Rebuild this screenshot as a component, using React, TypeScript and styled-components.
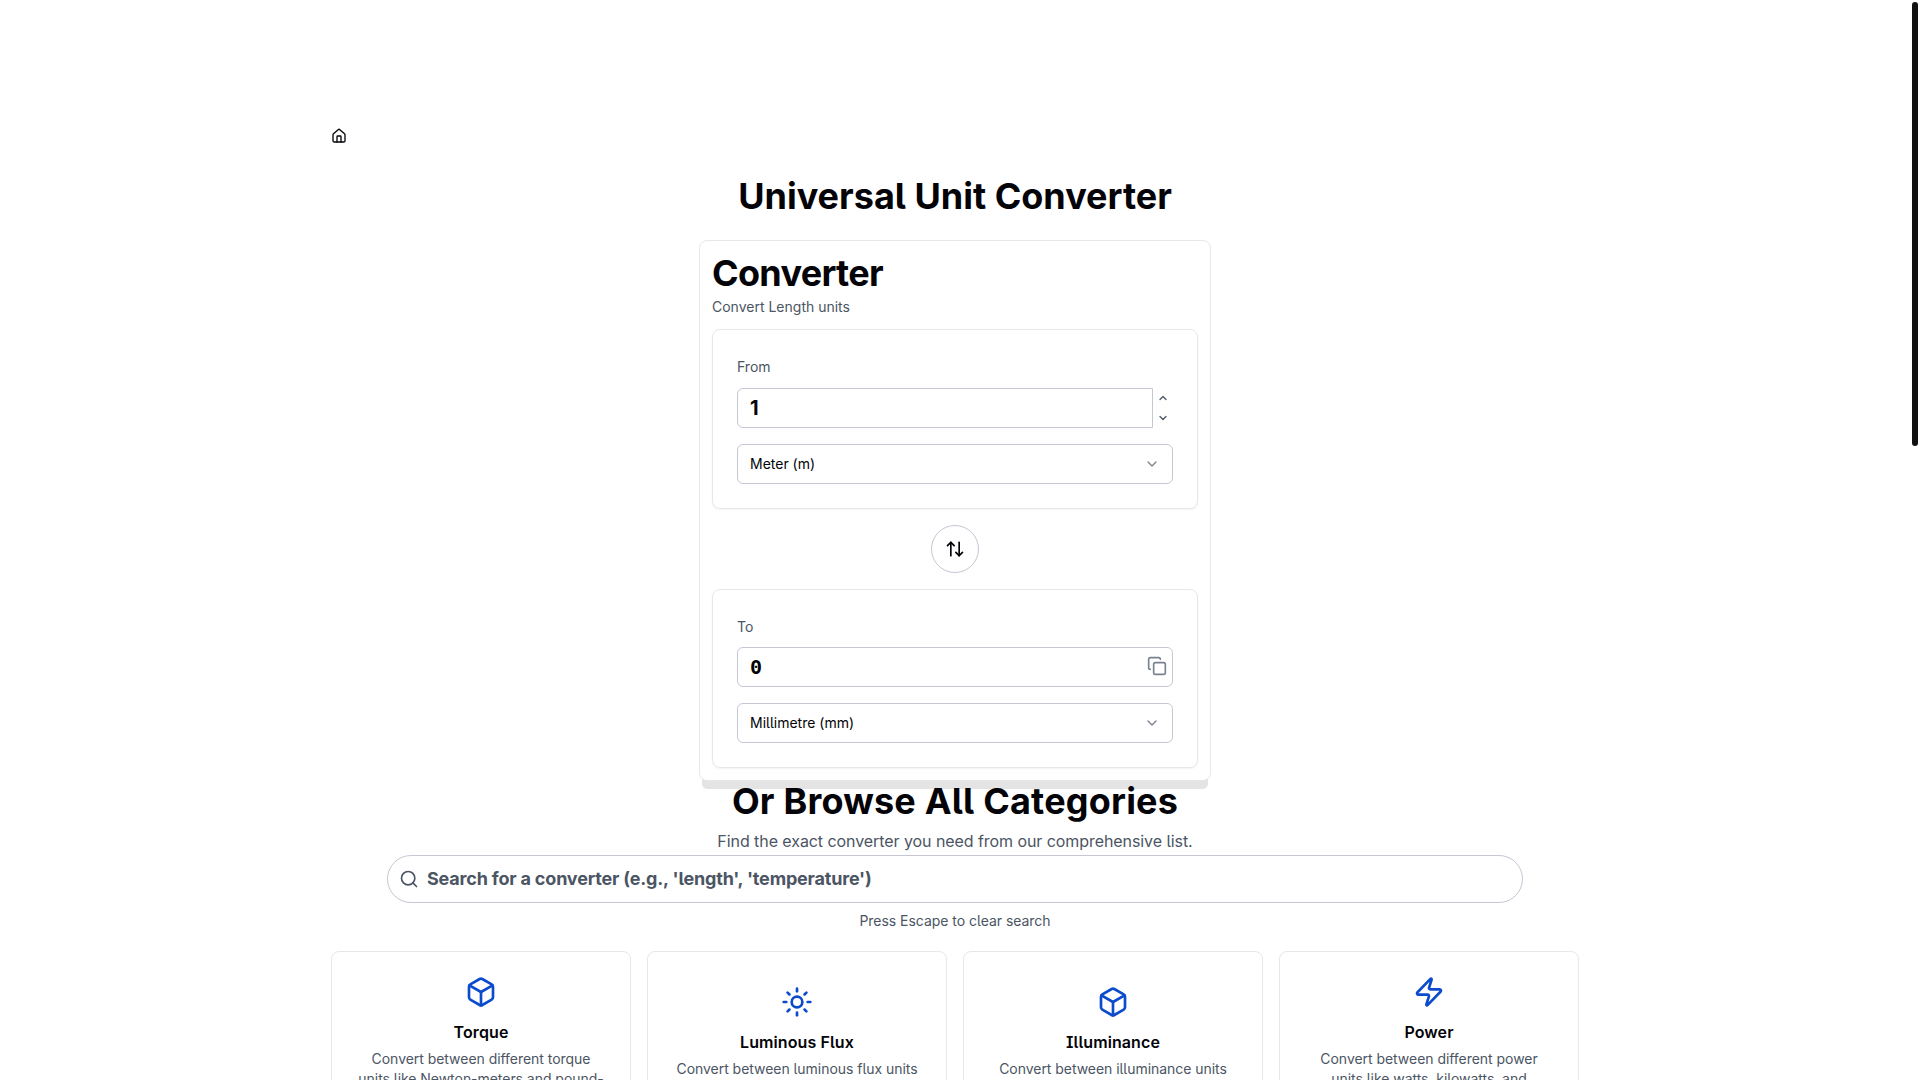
import { ArrowUpDown, Box, ChevronDown, ChevronUp, Copy, House, Search, Sun, Zap } from "lucide-react";
import type { LucideIcon } from "lucide-react";
import styled, { createGlobalStyle } from "styled-components";

const GlobalStyle = createGlobalStyle`
    body{
        margin:0;
        padding-right:10px;
        background:#fff;
        color:#030308;
        font-family:Inter, "Noto Sans", sans-serif;
        font-feature-settings:"ss02", "cv05", "cv08", "zero";
    }
    *{
        box-sizing:border-box;
    }
    input, button{
        font-feature-settings:inherit;
    }
`;

// the page's scrollbar thumb, headless capture does not paint a real one
const ScrollThumb = styled.div`
    position:fixed;
    top:2px;
    right:2px;
    width:6px;
    height:444px;
    border-radius:3px;
    background:#111;
`;

const Page = styled.main`
    max-width:1280px;
    margin:0 auto;
    padding:128px 16px 64px;
`;

const HomeLink = styled.a`
    display:flex;
    width:16px;
    height:16px;
    color:#030308;
`;

const Title = styled.h1`
    margin:32px 0 24px;
    font-size:36px;
    line-height:40px;
    font-weight:700;
    text-align:center;
`;

const ConverterCard = styled.section`
    width:512px;
    margin:0 auto;
    padding:12px;
    border:1px solid #e5e7eb;
    border-radius:8px;
    background:#fff;
    box-shadow:0 11px 0 -3px #e4e4e4;
`;

const CardTitle = styled.h2`
    margin:0;
    font-size:36px;
    line-height:40px;
    font-weight:700;
    letter-spacing:-.7px;
`;

const CardSubtitle = styled.p`
    margin:4px 0 12px;
    font-size:14px;
    line-height:20px;
    color:#4b5563;
`;

const Panel = styled.div`
    display:flex;
    flex-direction:column;
    gap:16px;
    padding:25px 24px 24px;
    border:1px solid #e5e7eb;
    border-radius:8px;
    box-shadow:0 1px 2px rgba(0,0,0,.05);
`;

const Field = styled.div`
    display:flex;
    flex-direction:column;
`;

const Label = styled.label<{ $tight?: boolean }>`
    margin-bottom:${(p) => (p.$tight ? "10px" : "11px")};
    padding-top:1px;
    font-size:14px;
    line-height:21px;
    color:#4b5563;
`;

const InputRow = styled.div`
    position:relative;
    display:flex;
    align-items:center;
`;

const ValueInput = styled.input<{ $mono?: boolean; $square?: boolean }>`
    flex:1;
    min-width:0;
    height:40px;
    padding:0 12px 1px;
    border:1px solid #c5c8d4;
    border-radius:${(p) => (p.$square ? "6px 0 0 6px" : "6px")};
    background:#fff;
    color:#030308;
    font-family:${(p) => (p.$mono ? `"DejaVu Sans Mono", monospace` : "Inter, sans-serif")};
    font-size:20px;
    font-weight:700;
    &:focus{
        outline:none;
    }
`;

const Stepper = styled.div`
    display:flex;
    flex-direction:column;
    align-items:center;
    gap:8px;
    width:20px;
    color:#4b5563;
`;

const CopyButton = styled.button`
    position:absolute;
    right:6px;
    top:9px;
    display:flex;
    padding:0;
    border:none;
    background:none;
    color:#7b8190;
`;

const UnitSelect = styled.button`
    display:flex;
    align-items:center;
    justify-content:space-between;
    width:100%;
    height:40px;
    padding:0 12px 1px;
    border:1px solid #c5c8d4;
    border-radius:6px;
    background:#fff;
    color:#030308;
    font-family:Inter, sans-serif;
    font-size:14px;
    svg{
        color:#7b8190;
    }
`;

const SwapRow = styled.div`
    display:flex;
    justify-content:center;
    margin:16px 0;
`;

const SwapButton = styled.button`
    display:flex;
    align-items:center;
    justify-content:center;
    width:48px;
    height:48px;
    padding:0;
    border:1px solid #c5c8d4;
    border-radius:50%;
    background:#fff;
    color:#030308;
`;

const BrowseTitle = styled.h2`
    margin:0 0 8px;
    font-size:36px;
    line-height:40px;
    font-weight:700;
    letter-spacing:.2px;
    text-align:center;
`;

const BrowseSubtitle = styled.p`
    margin:0;
    font-size:16px;
    line-height:24px;
    letter-spacing:-.07px;
    text-align:center;
    color:#4b5563;
`;

const SearchBox = styled.div`
    display:flex;
    align-items:center;
    gap:8px;
    width:1136px;
    height:48px;
    margin:2px auto 0;
    padding:0 11px;
    border:1px solid #c5c8d4;
    border-radius:24px;
    color:#4b5563;
`;

const SearchInput = styled.input`
    flex:1;
    padding:0 0 1px;
    border:none;
    background:none;
    font-family:Inter, sans-serif;
    font-size:18px;
    font-weight:700;
    letter-spacing:-.18px;
    &::placeholder{
        color:#4b5563;
        opacity:1;
    }
    &:focus{
        outline:none;
    }
`;

const Hint = styled.p`
    margin:8px 0 20px;
    font-size:14px;
    line-height:20px;
    letter-spacing:-.03px;
    text-align:center;
    color:#4b5563;
`;

const CategoryGrid = styled.div`
    display:grid;
    grid-template-columns:repeat(4, 1fr);
    gap:16px;
`;

const CategoryCard = styled.a`
    display:flex;
    flex-direction:column;
    align-items:center;
    justify-content:center;
    padding:24px;
    border:1px solid #e5e7eb;
    border-radius:8px;
    text-align:center;
`;

const CategoryIcon = styled.span`
    display:flex;
    color:#0b4bcc;
`;

const CategoryName = styled.h3`
    margin:12px 0 5px;
    font-size:16px;
    line-height:24px;
    font-weight:600;
    letter-spacing:.1px;
`;

const CategoryText = styled.p`
    margin:0;
    font-size:14px;
    line-height:20px;
    letter-spacing:-.04px;
    color:#4b5563;
`;

type Category = { name: string; text: string; icon: LucideIcon };

const categories: Category[] = [
    { name: "Torque", text: "Convert between different torque units like Newton-meters and pound-feet for your needs.", icon: Box },
    { name: "Luminous Flux", text: "Convert between luminous flux units such as lumens and talbots easily.", icon: Sun },
    { name: "Illuminance", text: "Convert between illuminance units such as lux and foot-candles easily.", icon: Box },
    { name: "Power", text: "Convert between different power units like watts, kilowatts, and horsepower for any job.", icon: Zap },
];

export default function App() {
    return (
        <>
            <GlobalStyle />
            <ScrollThumb />
            <Page>
                <HomeLink href="#" aria-label="Home">
                    <House size={16} />
                </HomeLink>
                <Title>Universal Unit Converter</Title>
                <ConverterCard>
                    <CardTitle>Converter</CardTitle>
                    <CardSubtitle>Convert Length units</CardSubtitle>
                    <Panel>
                        <Field>
                            <Label>From</Label>
                            <InputRow>
                                <ValueInput $square readOnly value="1" />
                                <Stepper>
                                    <ChevronUp size={12} strokeWidth={2.5} />
                                    <ChevronDown size={12} strokeWidth={2.5} />
                                </Stepper>
                            </InputRow>
                        </Field>
                        <UnitSelect>
                            Meter (m)
                            <ChevronDown size={16} />
                        </UnitSelect>
                    </Panel>
                    <SwapRow>
                        <SwapButton aria-label="Swap units">
                            <ArrowUpDown size={20} />
                        </SwapButton>
                    </SwapRow>
                    <Panel>
                        <Field>
                            <Label $tight>To</Label>
                            <InputRow>
                                <ValueInput $mono readOnly value="0" />
                                <CopyButton aria-label="Copy result">
                                    <Copy size={20} />
                                </CopyButton>
                            </InputRow>
                        </Field>
                        <UnitSelect>
                            Millimetre (mm)
                            <ChevronDown size={16} />
                        </UnitSelect>
                    </Panel>
                </ConverterCard>
                <BrowseTitle>Or Browse All Categories</BrowseTitle>
                <BrowseSubtitle>Find the exact converter you need from our comprehensive list.</BrowseSubtitle>
                <SearchBox>
                    <Search size={20} />
                    <SearchInput placeholder="Search for a converter (e.g., 'length', 'temperature')" />
                </SearchBox>
                <Hint>Press Escape to clear search</Hint>
                <CategoryGrid>
                    {categories.map((c) => (
                        <CategoryCard key={c.name}>
                            <CategoryIcon>
                                <c.icon size={32} />
                            </CategoryIcon>
                            <CategoryName>{c.name}</CategoryName>
                            <CategoryText>{c.text}</CategoryText>
                        </CategoryCard>
                    ))}
                </CategoryGrid>
            </Page>
        </>
    );
}
